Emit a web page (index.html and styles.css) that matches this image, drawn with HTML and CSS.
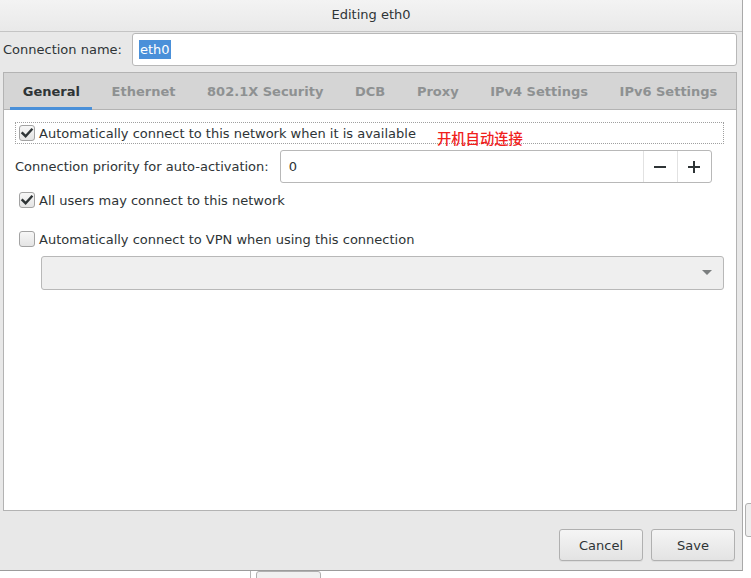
FILE: index.html
```html
<!DOCTYPE html>
<html>
<head>
<meta charset="utf-8">
<link rel="stylesheet" href="styles.css">
</head>
<body>
<div class="desk">
  <div class="dialog">
    <div class="titlebar">Editing eth0</div>
    <div class="name-row">
      <span class="label">Connection name:</span>
      <div class="entry"><span class="sel">eth0</span></div>
    </div>
    <div class="notebook">
      <div class="tabs">
        <div class="tab active">General</div>
        <div class="tab">Ethernet</div>
        <div class="tab">802.1X Security</div>
        <div class="tab">DCB</div>
        <div class="tab">Proxy</div>
        <div class="tab">IPv4 Settings</div>
        <div class="tab">IPv6 Settings</div>
      </div>
      <div class="page">
        <div class="check focus">
          <span class="box on"><svg viewBox="0 0 16 16" width="16" height="16"><path d="M3.5 8.2 L6.6 11.2 L12.6 4.6" fill="none" stroke="#2e3436" stroke-width="2.4" stroke-linecap="square" stroke-linejoin="miter"/></svg></span>
          <span>Automatically connect to this network when it is available</span>
          <span class="note">开机自动连接</span>
        </div>
        <div class="prio-row">
          <span class="label">Connection priority for auto-activation:</span>
          <div class="spin">
            <span class="spin-val">0</span>
            <span class="spin-btn"><svg viewBox="0 0 16 16" width="16" height="16"><path d="M2 8 H14" stroke="#2e3436" stroke-width="2"/></svg></span>
            <span class="spin-btn"><svg viewBox="0 0 16 16" width="16" height="16"><path d="M2 8 H14 M8 2 V14" stroke="#2e3436" stroke-width="2"/></svg></span>
          </div>
        </div>
        <div class="check row3">
          <span class="box on"><svg viewBox="0 0 16 16" width="16" height="16"><path d="M3.5 8.2 L6.6 11.2 L12.6 4.6" fill="none" stroke="#2e3436" stroke-width="2.4" stroke-linecap="square" stroke-linejoin="miter"/></svg></span>
          <span>All users may connect to this network</span>
        </div>
        <div class="check row4">
          <span class="box"></span>
          <span>Automatically connect to VPN when using this connection</span>
        </div>
        <div class="combo"><svg viewBox="0 0 10 6" width="10" height="6"><path d="M0 0 H10 L5 5 Z" fill="#7b7e7f"/></svg></div>
      </div>
    </div>
    <div class="actions">
      <div class="btn">Cancel</div>
      <div class="btn">Save</div>
    </div>
  </div>
  <div class="bg-frag frag-a"></div>
  <div class="bg-frag frag-b"></div>
  <div class="bg-frag frag-c"></div>
</div>
</body>
</html>
```

FILE: styles.css
```css
html, body {
  margin: 0;
  padding: 0;
  background: #ffffff;
}
body {
  font-family: "DejaVu Sans", sans-serif;
  font-size: 13px;
  color: #2e3436;
}
.desk {
  position: relative;
  width: 751px;
  height: 578px;
  overflow: hidden;
}
.dialog {
  width: 742px;
  height: 570px;
  border-right: 1px solid #a9a9a9;
  border-bottom: 1px solid #9c9c9c;
  background: #e8e8e8;
  display: flex;
  flex-direction: column;
}
.titlebar {
  height: 32px;
  border-bottom: 1px solid #c4c4c4;
  background: linear-gradient(#f3f3f3, #e9e9e9);
  display: flex;
  align-items: center;
  justify-content: center;
  padding-bottom: 2px;
  box-sizing: border-box;
  color: #2e3436;
}
.name-row {
  display: flex;
  align-items: center;
  gap: 10px;
  padding-left: 3px;
  height: 34px;
}
.entry {
  width: 605px;
  height: 33px;
  box-sizing: border-box;
  border: 1px solid #b8b8b8;
  border-radius: 3px;
  background: #ffffff;
  display: flex;
  align-items: center;
  padding-left: 6px;
}
.sel {
  background: #4a90d9;
  color: #ffffff;
  line-height: 19px;
  padding: 0 1px;
}
.notebook {
  margin: 6px 0 0 3px;
  width: 734px;
  height: 439px;
  box-sizing: border-box;
  border: 1px solid #b3b3b3;
  display: flex;
  flex-direction: column;
}
.tabs {
  height: 36px;
  background: #d5d5d5;
  border-bottom: 1px solid #b3b3b3;
  display: flex;
  padding-left: 3px;
}
.tab {
  position: relative;
  padding: 1px 15.8px 0;
  display: flex;
  align-items: center;
  font-weight: bold;
  color: #8e9192;
}
.tab.active {
  color: #2e3436;
}
.tab.active::after {
  content: "";
  position: absolute;
  left: 3px;
  right: 4px;
  bottom: -1px;
  height: 3px;
  background: #4a90d9;
}
.page {
  flex: 1;
  background: #ffffff;
  padding: 12px 12px 0 11px;
  display: flex;
  flex-direction: column;
}
.check {
  position: relative;
  display: flex;
  align-items: center;
  gap: 4px;
  height: 22px;
  box-sizing: border-box;
  border: 1px dotted transparent;
  padding-left: 3px;
}
.check.focus {
  border-color: #a0a0a0;
}
.box {
  width: 16px;
  height: 16px;
  box-sizing: border-box;
  border: 1px solid #a3a3a3;
  border-radius: 3px;
  background: linear-gradient(#f7f7f7, #e4e4e4);
  display: flex;
  flex: none;
}
.box svg {
  margin: -1px;
}
.note {
  position: absolute;
  left: 421px;
  top: 6px;
  font-family: "Noto Sans CJK SC", sans-serif;
  font-size: 14.3px;
  font-weight: 500;
  color: #f0211c;
  line-height: 18px;
}
.prio-row {
  display: flex;
  align-items: center;
  gap: 11px;
  margin-top: 6px;
}
.spin {
  width: 432px;
  height: 33px;
  box-sizing: border-box;
  border: 1px solid #b8b8b8;
  border-radius: 3px;
  background: #ffffff;
  display: flex;
  align-items: stretch;
}
.spin-val {
  flex: 1;
  display: flex;
  align-items: center;
  padding-left: 8px;
}
.spin-btn {
  width: 33px;
  border-left: 1px solid #e2e2e2;
  display: flex;
  align-items: center;
  justify-content: center;
}
.row3 {
  margin-top: 6px;
}
.row4 {
  margin-top: 17px;
}
.combo {
  margin: 6px 0 0 26px;
  height: 34px;
  box-sizing: border-box;
  border: 1px solid #b8b8b8;
  border-radius: 3px;
  background: #efefef;
  display: flex;
  align-items: center;
  justify-content: flex-end;
  padding-right: 11px;
}
.actions {
  display: flex;
  justify-content: flex-end;
  gap: 8px;
  padding: 18px 7px 0 0;
}
.btn {
  width: 84px;
  height: 32px;
  box-sizing: border-box;
  border: 1px solid #b0b0b0;
  border-radius: 3px;
  background: linear-gradient(#f5f5f5, #e3e3e3);
  display: flex;
  align-items: center;
  justify-content: center;
  box-shadow: 0 1px 0 rgba(0,0,0,0.05);
}
.bg-frag {
  position: absolute;
  box-sizing: border-box;
}
.frag-a {
  left: 250px;
  top: 571px;
  width: 2px;
  height: 10px;
  border-left: 1px solid #b5b5b5;
}
.frag-b {
  left: 256px;
  top: 571px;
  width: 65px;
  height: 12px;
  border: 1px solid #b0b0b0;
  border-radius: 3px;
  background: #f0f0f0;
}
.frag-c {
  left: 745px;
  top: 503px;
  width: 12px;
  height: 34px;
  border: 1px solid #b0b0b0;
  border-radius: 3px;
  background: #eeeeee;
}
```
